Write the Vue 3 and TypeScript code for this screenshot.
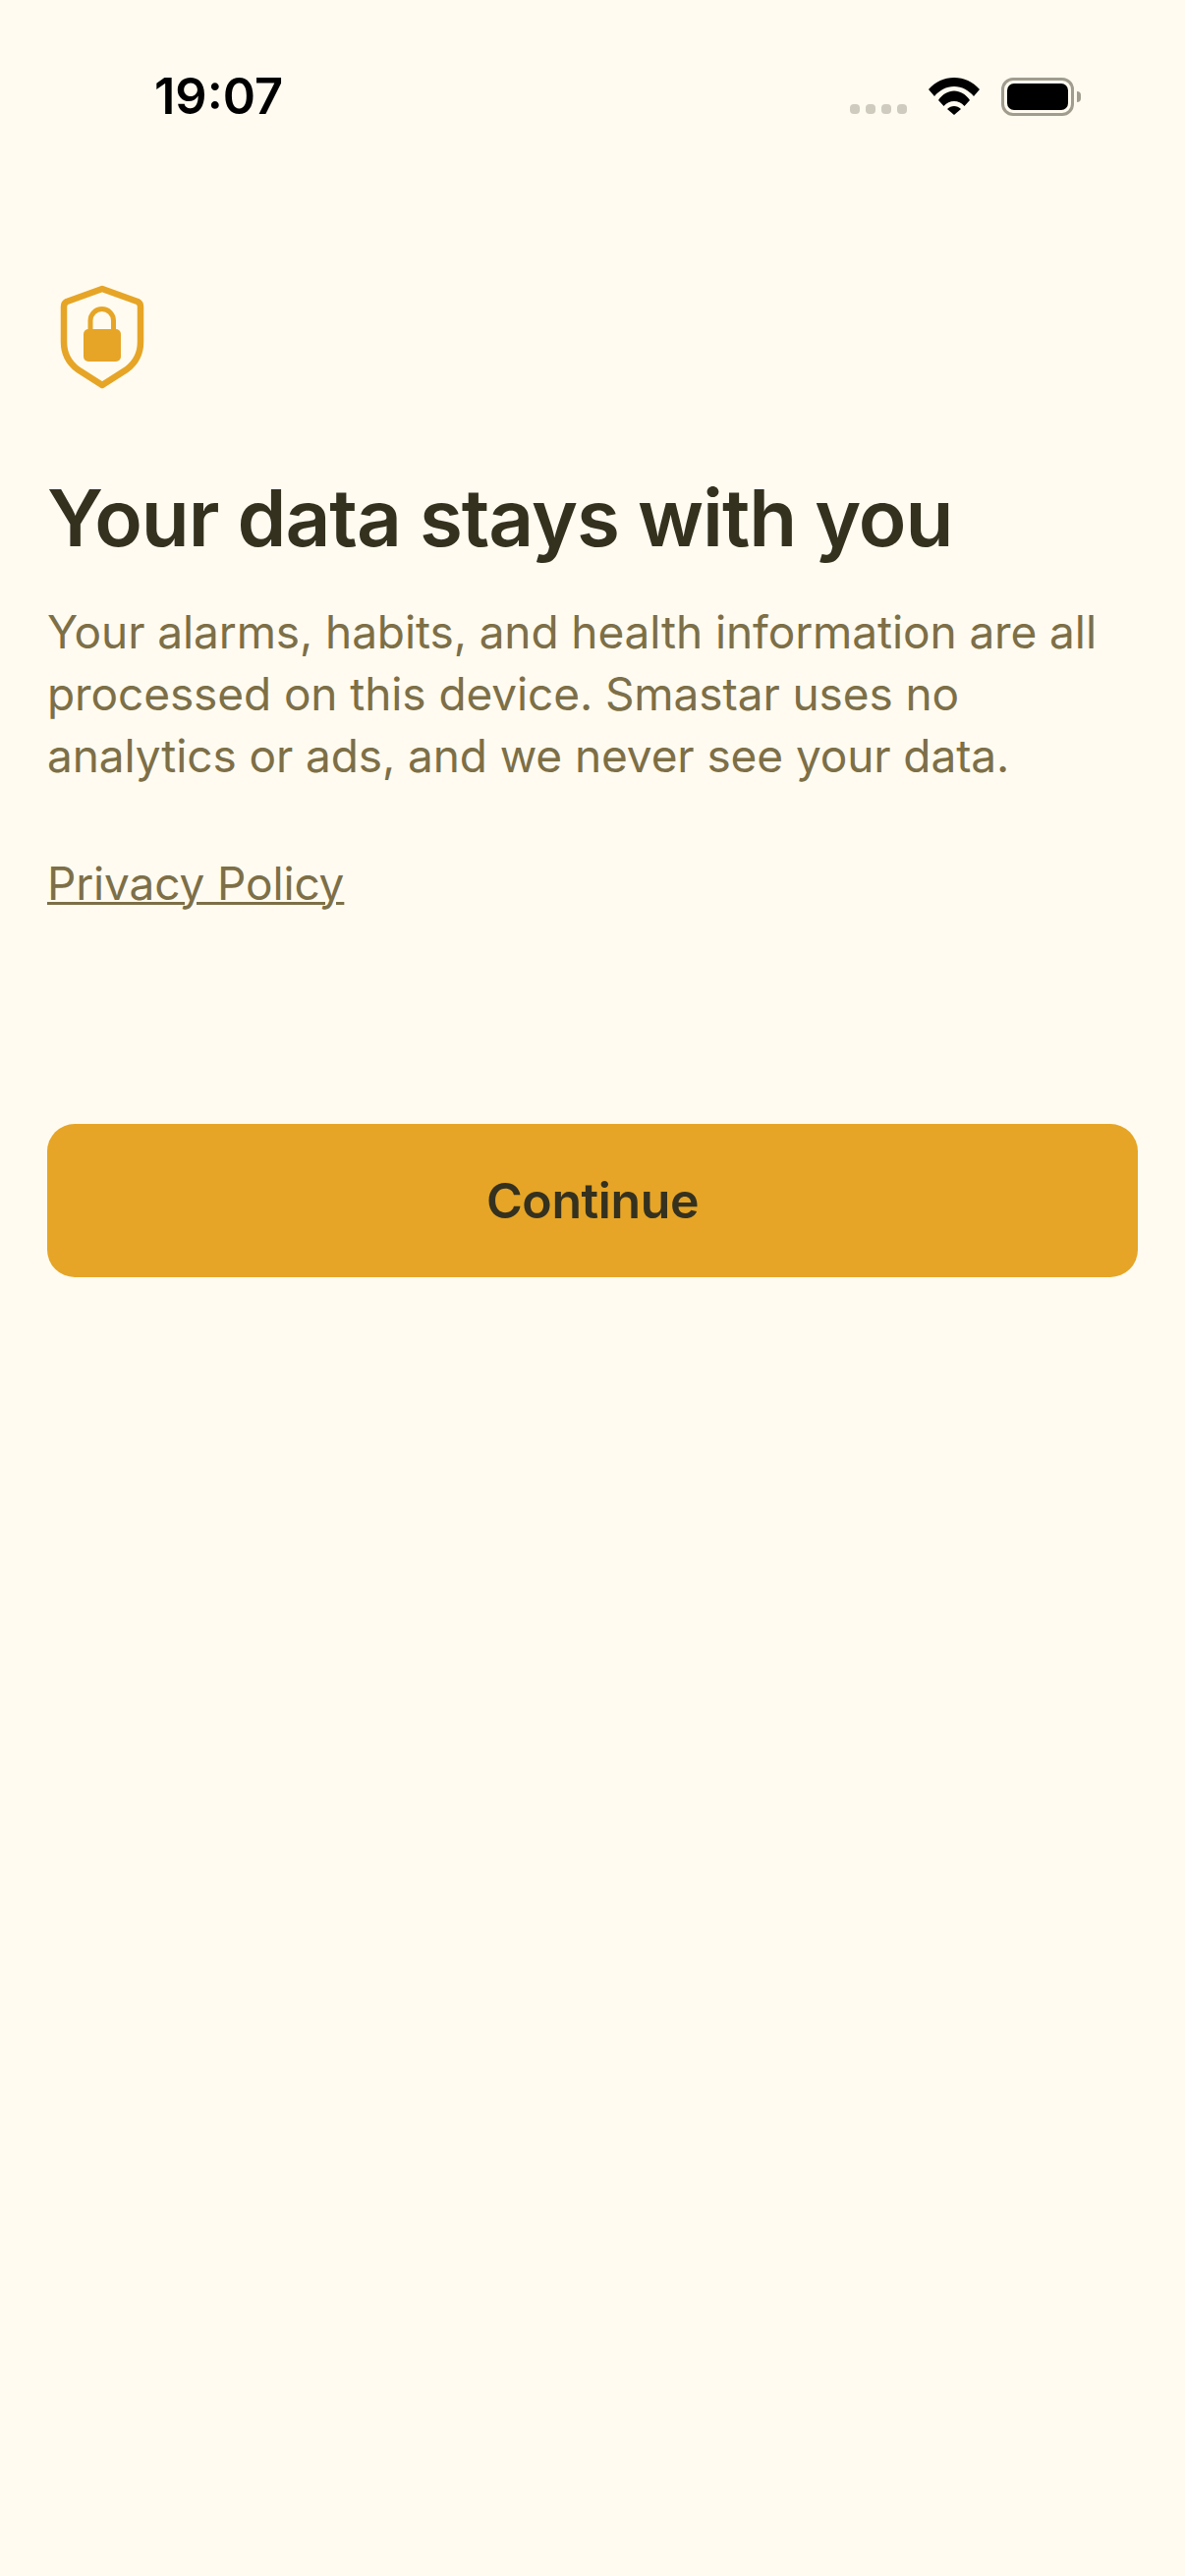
<template>
  <main class="screen">
    <header class="status">
      <span class="time">19:07</span>
      <div class="status-icons">
        <div class="signal">
          <i v-for="n in 4" :key="n"></i>
        </div>
        <svg class="wifi" width="52" height="38" viewBox="0 0 52 38">
          <path d="M0 12C7 4 16 0 26 0S45 4 52 12L46 19C41 13 34 9 26 9S11 13 6 19Z" fill="#000" />
          <path d="M10 23C14 17 20 13.500 26 13.500S38 17 42 23L36.500 29C33.500 25.500 30 24 26 24S18.500 25.500 15.500 29Z" fill="#000" />
          <path d="M19 32C21 30 23.500 29 26 29S31 30 33 32L26 38Z" fill="#000" />
        </svg>
        <div class="battery">
          <div class="battery-body"><div class="battery-fill"></div></div>
          <div class="battery-cap"></div>
        </div>
      </div>
    </header>

    <section class="content">
      <svg class="shield" width="90" height="108" viewBox="0 0 90 108">
        <path
          d="M45 4 L81 17 Q84 18.500 84 22 V58 C84 71 78 80 70 86 L45 102 L20 86 C12 80 6 71 6 58 V22 Q6 18.500 9 17 Z"
          fill="none"
          stroke="#e6a526"
          stroke-width="6.500"
          stroke-linejoin="round"
        />
        <path d="M33 46V36.250a11.750 11.750 0 0 1 23.500 0V46" fill="none" stroke="#e6a526" stroke-width="5" />
        <rect x="26" y="45" width="38" height="33" rx="5" fill="#e6a526" />
      </svg>

      <h1 class="title">Your data stays with you</h1>
      <p class="body">Your alarms, habits, and health information are all processed on this device. Smastar uses no analytics or ads, and we never see your data.</p>
      <a class="link" href="#">Privacy Policy</a>
      <button class="continue" type="button">Continue</button>
    </section>
  </main>
</template>

<script setup lang="ts">
</script>

<style scoped>
.screen {
  width: 1206px;
  height: 2622px;
  background: #fffbf0;
  font-family: Inter, "Liberation Sans", sans-serif;
  overflow: hidden;
}

.status {
  display: flex;
  justify-content: space-between;
  align-items: center;
  height: 72px;
  padding: 62px 106px 0 157px;
}
.time {
  margin-bottom: 2px;
  font-size: 50.500px;
  font-weight: 600;
  color: #000;
}
.status-icons {
  display: flex;
  align-items: center;
}
.signal {
  display: flex;
  gap: 6px;
  margin-top: 26px;
  margin-right: 22px;
}
.signal i {
  width: 10px;
  height: 10px;
  border-radius: 4px;
  background: #cfcbbe;
}
.wifi {
  margin-right: 22px;
}
.battery {
  display: flex;
  align-items: center;
}
.battery-body {
  width: 74px;
  height: 39px;
  box-sizing: border-box;
  border: 3px solid #a09c8e;
  border-radius: 12px;
  padding: 3px;
}
.battery-fill {
  height: 100%;
  background: #000;
  border-radius: 7px;
}
.battery-cap {
  width: 4px;
  height: 11px;
  margin-left: 3px;
  background: #a09c8e;
  border-radius: 0 4px 4px 0;
}

.content {
  display: flex;
  flex-direction: column;
  align-items: flex-start;
  padding: 156px 48px 0;
}
.shield {
  margin-left: 11px;
}
.title {
  margin: 81px 0 0;
  font-size: 80px;
  line-height: 96px;
  font-weight: 600;
  letter-spacing: -1.050px;
  color: #35311f;
  white-space: nowrap;
}
.body {
  margin: 37px 0 0;
  font-size: 46px;
  line-height: 63px;
  letter-spacing: -0.100px;
  color: #7d6f47;
}
.link {
  margin-top: 67px;
  font-size: 46px;
  line-height: 63px;
  letter-spacing: -0.150px;
  color: #7d6f47;
  text-decoration: underline;
  text-decoration-thickness: 3px;
}
.continue {
  margin-top: 213px;
  width: 1110px;
  height: 156px;
  border: 0;
  border-radius: 28px;
  background: #e6a526;
  color: #35311f;
  font-family: inherit;
  font-size: 50px;
  font-weight: 600;
  letter-spacing: -0.400px;
}
</style>
